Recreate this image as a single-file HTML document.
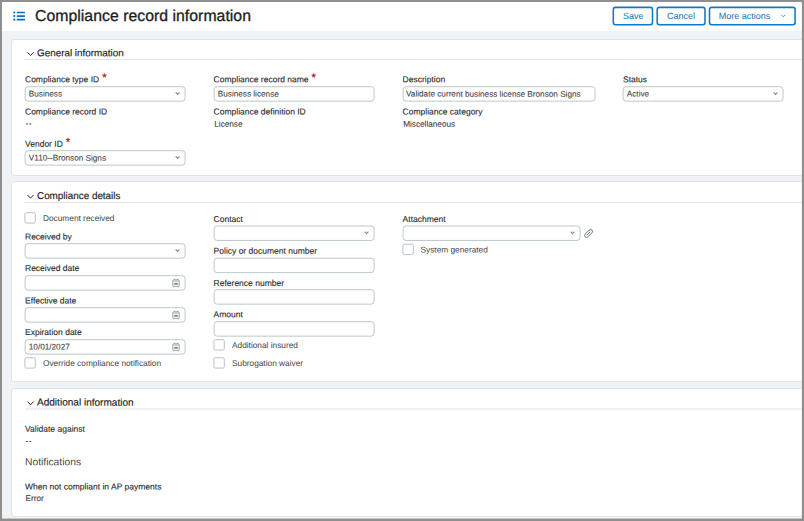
<!DOCTYPE html>
<html><head><meta charset="utf-8"><title>Compliance record information</title>
<style>
*{box-sizing:border-box;margin:0;padding:0}
html,body{width:804px;height:521px;overflow:hidden;background:#f0f3f5;font-family:"Liberation Sans",sans-serif;color:#222}
#frame{position:absolute;left:0;top:0;width:804px;height:521px;border:2px solid #8f8f8f;box-shadow:inset 0 -1px 0 rgba(143,143,143,.45), inset -1px 0 0 rgba(143,143,143,.1);z-index:50;pointer-events:none}
#hdr{position:absolute;left:0;top:0;width:804px;height:31px;background:#fff}
#shapes{position:absolute;left:0;top:0;width:804px;height:521px}
.card{position:absolute;left:11px;width:801px;background:#fff;border:1px solid #dee3e6;border-radius:3px}
.rule{position:absolute;left:25px;width:790px;height:1px;background:#dfe4e8}
.t{position:absolute;white-space:nowrap;transform:translate(var(--dx,0px),var(--dy,0px)) rotate(0.03deg);transform-origin:0 50%}
#title{font-size:15.8px;letter-spacing:.03px;line-height:18px;color:#1c1c1c;-webkit-text-stroke:.3px #1c1c1c}
.sec{font-size:9.9px;line-height:12px;color:#222;-webkit-text-stroke:.15px #222}
.sub{font-size:10.3px;line-height:12px;color:#4a4a4a}
.lbl{font-size:8.5px;line-height:10px;color:#2b2b2b;-webkit-text-stroke:.12px #2b2b2b}
.val{font-size:8.2px;line-height:10px;color:#3c3c3c;-webkit-text-stroke:.1px #3c3c3c}
.it{font-size:8.2px;line-height:10px;color:#444;-webkit-text-stroke:.1px #444}
.cbl{font-size:8.3px;line-height:10px;color:#444}
.bt{font-size:9px;line-height:10px;color:#1173bb}
.req{color:#c00a26;font-size:11.4px;-webkit-text-stroke:.2px #c00a26;position:relative;top:-.9px;left:.7px;line-height:6px}
</style></head><body>
<div id="hdr"></div>
<div class="card" style="top:39px;height:137px"></div>
<div class="rule" style="top:59px"></div>
<div class="card" style="top:181px;height:201px"></div>
<div class="rule" style="top:202px"></div>
<div class="card" style="top:388px;height:129px"></div>
<div class="rule" style="top:409px;transform:translateY(-.5px)"></div>
<svg id="shapes" width="804" height="521" viewBox="0 0 804 521">
<g fill="#0d6fc0" transform="translate(13.2 11.4)"><circle cx="1.1" cy="1.1" r="1.1"/><rect x="3.5" y="0.25" width="8.4" height="1.7" rx=".6"/><circle cx="1.1" cy="4.7" r="1.1"/><rect x="3.5" y="3.85" width="8.4" height="1.7" rx=".6"/><circle cx="1.1" cy="8.3" r="1.1"/><rect x="3.5" y="7.45" width="8.4" height="1.7" rx=".6"/></g>
<rect x="613.30" y="7.35" width="39.20" height="17.3" rx="2.2" fill="#fff" stroke="#0f7bc6" stroke-width="1.55"/>
<rect x="657.20" y="7.35" width="47.80" height="17.3" rx="2.2" fill="#fff" stroke="#0f7bc6" stroke-width="1.55"/>
<rect x="709.50" y="7.35" width="85.60" height="17.3" rx="2.2" fill="#fff" stroke="#0f7bc6" stroke-width="1.55"/>
<path d="M781.40 14.75 L783.30 16.85 L785.20 14.75" fill="none" stroke="#3f8ccb" stroke-width="0.95"/>
<path d="M27.50 52.30 L30.50 55.50 L33.50 52.30" fill="none" stroke="#2a2a2a" stroke-width="1.0"/>
<path d="M27.50 195.00 L30.50 198.20 L33.50 195.00" fill="none" stroke="#2a2a2a" stroke-width="1.0"/>
<path d="M27.50 401.60 L30.50 404.80 L33.50 401.60" fill="none" stroke="#2a2a2a" stroke-width="1.0"/>
<rect x="25.10" y="86.70" width="160.00" height="14.45" rx="3" fill="#fff" stroke="#bdc7cb" stroke-width="1"/>
<path d="M175.65 92.40 L177.50 94.40 L179.35 92.40" fill="none" stroke="#858a8f" stroke-width="1.05"/>
<rect x="25.10" y="150.70" width="160.00" height="14.45" rx="3" fill="#fff" stroke="#bdc7cb" stroke-width="1"/>
<path d="M175.65 156.40 L177.50 158.40 L179.35 156.40" fill="none" stroke="#858a8f" stroke-width="1.05"/>
<rect x="214.10" y="86.70" width="160.00" height="14.45" rx="3" fill="#fff" stroke="#bdc7cb" stroke-width="1"/>
<rect x="403.10" y="86.70" width="192.00" height="14.45" rx="3" fill="#fff" stroke="#bdc7cb" stroke-width="1"/>
<rect x="623.10" y="86.70" width="160.00" height="14.45" rx="3" fill="#fff" stroke="#bdc7cb" stroke-width="1"/>
<path d="M773.65 92.40 L775.50 94.40 L777.35 92.40" fill="none" stroke="#858a8f" stroke-width="1.05"/>
<rect x="24.90" y="212.70" width="10.40" height="10.40" rx="1.5" fill="#fff" stroke="#b9c2c6" stroke-width="1"/>
<rect x="25.10" y="243.70" width="160.00" height="14.45" rx="3" fill="#fff" stroke="#bdc7cb" stroke-width="1"/>
<path d="M175.65 249.40 L177.50 251.40 L179.35 249.40" fill="none" stroke="#858a8f" stroke-width="1.05"/>
<rect x="25.10" y="275.70" width="160.00" height="14.45" rx="3" fill="#fff" stroke="#bdc7cb" stroke-width="1"/>
<g transform="translate(172.20 278.70) scale(0.95 0.945)"><rect x="0.6" y="1.2" width="6.8" height="7.2" rx="1.3" fill="#f3f4f5" stroke="#92979b" stroke-width="0.9"/><rect x="1.9" y="0.2" width="1" height="1.6" fill="#8d9195"/><rect x="5.1" y="0.2" width="1" height="1.6" fill="#8d9195"/><rect x="1.05" y="1.65" width="5.9" height="1.7" fill="#c4c8cb"/><rect x="1.9" y="4.6" width="4.2" height="1.9" rx=".4" fill="#868a8e"/></g>
<rect x="25.10" y="307.70" width="160.00" height="14.45" rx="3" fill="#fff" stroke="#bdc7cb" stroke-width="1"/>
<g transform="translate(172.20 310.70) scale(0.95 0.945)"><rect x="0.6" y="1.2" width="6.8" height="7.2" rx="1.3" fill="#f3f4f5" stroke="#92979b" stroke-width="0.9"/><rect x="1.9" y="0.2" width="1" height="1.6" fill="#8d9195"/><rect x="5.1" y="0.2" width="1" height="1.6" fill="#8d9195"/><rect x="1.05" y="1.65" width="5.9" height="1.7" fill="#c4c8cb"/><rect x="1.9" y="4.6" width="4.2" height="1.9" rx=".4" fill="#868a8e"/></g>
<rect x="25.10" y="339.70" width="160.00" height="14.45" rx="3" fill="#fff" stroke="#bdc7cb" stroke-width="1"/>
<g transform="translate(172.20 342.70) scale(0.95 0.945)"><rect x="0.6" y="1.2" width="6.8" height="7.2" rx="1.3" fill="#f3f4f5" stroke="#92979b" stroke-width="0.9"/><rect x="1.9" y="0.2" width="1" height="1.6" fill="#8d9195"/><rect x="5.1" y="0.2" width="1" height="1.6" fill="#8d9195"/><rect x="1.05" y="1.65" width="5.9" height="1.7" fill="#c4c8cb"/><rect x="1.9" y="4.6" width="4.2" height="1.9" rx=".4" fill="#868a8e"/></g>
<rect x="24.90" y="357.70" width="10.40" height="10.40" rx="1.5" fill="#fff" stroke="#b9c2c6" stroke-width="1"/>
<rect x="214.10" y="226.00" width="160.00" height="14.45" rx="3" fill="#fff" stroke="#bdc7cb" stroke-width="1"/>
<path d="M364.65 231.70 L366.50 233.70 L368.35 231.70" fill="none" stroke="#858a8f" stroke-width="1.05"/>
<rect x="214.10" y="258.20" width="160.00" height="14.45" rx="3" fill="#fff" stroke="#bdc7cb" stroke-width="1"/>
<rect x="214.10" y="289.70" width="160.00" height="14.45" rx="3" fill="#fff" stroke="#bdc7cb" stroke-width="1"/>
<rect x="214.10" y="321.70" width="160.00" height="14.45" rx="3" fill="#fff" stroke="#bdc7cb" stroke-width="1"/>
<rect x="213.90" y="339.70" width="10.40" height="10.40" rx="1.5" fill="#fff" stroke="#b9c2c6" stroke-width="1"/>
<rect x="213.90" y="357.70" width="10.40" height="10.40" rx="1.5" fill="#fff" stroke="#b9c2c6" stroke-width="1"/>
<rect x="403.10" y="226.00" width="177.00" height="14.45" rx="3" fill="#fff" stroke="#bdc7cb" stroke-width="1"/>
<path d="M570.65 231.70 L572.50 233.70 L574.35 231.70" fill="none" stroke="#858a8f" stroke-width="1.05"/>
<g transform="translate(583 228) rotate(45 5.5 5.5)" fill="none" stroke="#63686c" stroke-width="0.9" stroke-linecap="round"><path d="M3.6 3.8 V8.3 A1.9 1.9 0 0 0 7.4 8.3 V2.5 A1.9 1.9 0 0 0 3.6 2.5 V3.8"/><path d="M5.5 3.6 V7.8"/></g>
<rect x="402.90" y="244.20" width="10.40" height="10.40" rx="1.5" fill="#fff" stroke="#b9c2c6" stroke-width="1"/>
</svg>
<div id="title" class="t " style="left:35px;top:6px;--dy:0.9px">Compliance record information</div>
<div class="t bt" style="left:623px;top:11px;--dx:0.1px">Save</div>
<div class="t bt" style="left:667px;top:11px;--dx:0.1px">Cancel</div>
<div class="t bt" style="left:718px;top:11px;--dx:0.7px">More actions</div>
<div class="t sec" style="left:37px;top:47px;--dy:0.3px">General information</div>
<div class="t sec" style="left:37px;top:190px">Compliance details</div>
<div class="t sec" style="left:37px;top:396px;--dy:0.6px;font-size:10.05px">Additional information</div>
<div class="t lbl" style="left:25px;top:74px;--dy:0.3px">Compliance type ID <span class="req">*</span></div>
<div class="t it" style="left:28px;top:89px;--dx:0.8px;--dy:0.6px">Business</div>
<div class="t lbl" style="left:25px;top:106px;--dy:0.5px">Compliance record ID</div>
<div class="t val" style="left:25px;top:119px;--dx:0.6px;letter-spacing:.5px">--</div>
<div class="t lbl" style="left:25px;top:138px;--dy:0.7px">Vendor ID <span class="req">*</span></div>
<div class="t it" style="left:28px;top:153px;--dx:0.8px;--dy:0.6px">V110--Bronson Signs</div>
<div class="t lbl" style="left:213px;top:74px;--dx:0.6px;--dy:0.3px">Compliance record name <span class="req">*</span></div>
<div class="t it" style="left:217px;top:89px;--dx:0.8px;--dy:0.6px">Business license</div>
<div class="t lbl" style="left:213px;top:106px;--dx:0.6px;--dy:0.5px">Compliance definition ID</div>
<div class="t val" style="left:214px;top:119px;--dx:0.3px;--dy:0.7px">License</div>
<div class="t lbl" style="left:402px;top:74px;--dx:0.6px;--dy:0.3px">Description</div>
<div class="t it" style="left:406px;top:89px;--dy:0.6px">Validate current business license Bronson Signs</div>
<div class="t lbl" style="left:402px;top:106px;--dx:0.6px;--dy:0.5px">Compliance category</div>
<div class="t val" style="left:403px;top:119px;--dx:0.2px;--dy:0.7px">Miscellaneous</div>
<div class="t lbl" style="left:623px;top:74px;--dy:0.3px">Status</div>
<div class="t it" style="left:626px;top:89px;--dx:0.8px;--dy:0.6px">Active</div>
<div class="t cbl" style="left:43px;top:213px">Document received</div>
<div class="t lbl" style="left:25px;top:231px;--dy:0.5px">Received by</div>
<div class="t lbl" style="left:25px;top:263px">Received date</div>
<div class="t lbl" style="left:25px;top:295px;--dy:0.5px">Effective date</div>
<div class="t lbl" style="left:25px;top:327px">Expiration date</div>
<div class="t it" style="left:28px;top:342px;--dx:0.8px;--dy:0.6px">10/01/2027</div>
<div class="t cbl" style="left:43px;top:358px">Override compliance notification</div>
<div class="t lbl" style="left:213px;top:214px;--dx:0.6px">Contact</div>
<div class="t lbl" style="left:213px;top:245px;--dx:0.6px;--dy:0.8px">Policy or document number</div>
<div class="t lbl" style="left:213px;top:278px;--dx:0.6px">Reference number</div>
<div class="t lbl" style="left:213px;top:309px;--dx:0.6px;--dy:0.3px">Amount</div>
<div class="t cbl" style="left:232px;top:340px">Additional insured</div>
<div class="t cbl" style="left:232px;top:358px">Subrogation waiver</div>
<div class="t lbl" style="left:402px;top:214px;--dx:0.6px">Attachment</div>
<div class="t cbl" style="left:420px;top:244px;--dx:0.5px;--dy:0.5px">System generated</div>
<div class="t lbl" style="left:25px;top:423px;--dy:0.7px">Validate against</div>
<div class="t val" style="left:25px;top:436px;--dx:0.6px;--dy:0.4px;letter-spacing:.5px">--</div>
<div class="t sub" style="left:25px;top:456px;--dy:0.2px">Notifications</div>
<div class="t lbl" style="left:25px;top:481px;--dy:0.4px">When not compliant in AP payments</div>
<div class="t val" style="left:25px;top:494px;--dx:0.5px">Error</div>
<div id="frame"></div>
</body></html>
